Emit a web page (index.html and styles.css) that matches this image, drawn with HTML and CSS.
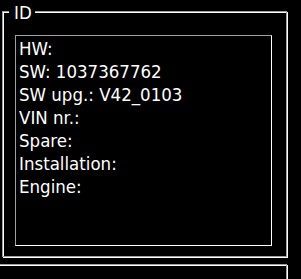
FILE: index.html
```html
<!DOCTYPE html>
<html>
<head>
<meta charset="utf-8">
<link rel="stylesheet" href="styles.css">
</head>
<body>
<div class="group">
  <div class="legend">ID</div>
  <div class="listbox">
    <div class="row">HW:</div>
    <div class="row">SW: 1037367762</div>
    <div class="row">SW upg.: V42_0103</div>
    <div class="row">VIN nr.:</div>
    <div class="row">Spare:</div>
    <div class="row">Installation:</div>
    <div class="row">Engine:</div>
  </div>
</div>
<div class="group next"></div>
</body>
</html>
```
FILE: styles.css
```css
html, body {
  margin: 0;
  padding: 0;
  background: #000;
  overflow: hidden;
  width: 301px;
  height: 279px;
}
body {
  font-family: "DejaVu Sans Condensed", "DejaVu Sans", sans-serif;
  font-size: 18.5px;
  line-height: 23px;
  color: #fff;
}
.group {
  position: relative;
  box-sizing: border-box;
  margin: 11px 0 0 2px;
  width: 285px;
  height: 246px;
  border: 1px solid #a0a0a0;
  box-shadow: inset 1px 1px 0 #fff, 1px 1px 0 #fff;
  padding: 23px 0 0 12px;
}
.group.next {
  margin: 7px 0 0 -10px;
  width: 297px;
  height: 15px;
  border-bottom: none;
}
.legend {
  position: absolute;
  top: -11px;
  left: 6px;
  padding: 0 3px 0 5px;
  background: #000;
}
.listbox {
  box-sizing: border-box;
  width: 257px;
  height: 211px;
  border-top: 1px solid #a0a0a0;
  border-left: 1px solid #a0a0a0;
  border-right: 1px solid #fff;
  border-bottom: 1px solid #fff;
  padding: 1px 0 0 3px;
}
.row {
  white-space: nowrap;
}
```
